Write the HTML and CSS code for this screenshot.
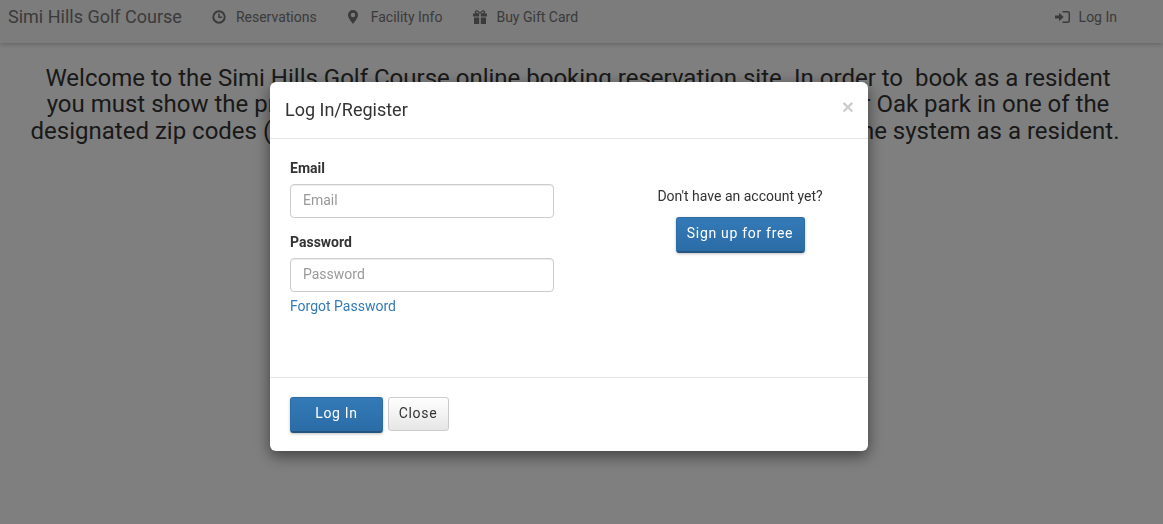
FILE: index.html
```html
<!DOCTYPE html>
<html lang="en">

<head>
    <meta charset="UTF-8">
    <title>Simi Hills Golf Course</title>
    <link rel="stylesheet" href="styles.css">
</head>

<body>

    <nav class="navbar">
        <a class="brand" href="#">Simi Hills Golf Course</a>
        <a class="nav-link" href="#">
            <svg class="icon" viewBox="0 0 14 14"><circle cx="7" cy="7" r="5.7" fill="none" stroke="currentColor" stroke-width="2"/><path d="M6.2 3.4h1.500v3.100h2.400V8H6.200z" fill="currentColor"/></svg>
            <span>Reservations</span>
        </a>
        <a class="nav-link nav-info" href="#">
            <svg class="icon icon-pin" viewBox="0 0 10 14"><path fill-rule="evenodd" d="M5 0a5 5 0 0 1 5 5c0 2.800-3.300 6.700-5 9C3.300 11.700 0 7.800 0 5a5 5 0 0 1 5-5zm0 2.800a2.200 2.200 0 1 0 0 4.400 2.200 2.200 0 0 0 0-4.400z" fill="currentColor"/></svg>
            <span>Facility Info</span>
        </a>
        <a class="nav-link nav-gift" href="#">
            <svg class="icon" viewBox="0 0 14 14"><path fill-rule="evenodd" d="M3.800 0.300c1.300 0 2.500 1 3.200 2.300C7.700 1.300 8.900 0.300 10.200 0.300c1.200 0 2 .7 2 1.700 0 .6-.3 1.100-.7 1.500H14v3H7.800v-3h-1.600v3H0v-3h2.500C2.100 3.100 1.800 2.600 1.800 2c0-1 .8-1.700 2-1.700zm.1 1.300c-.5 0-.8.200-.8.500 0 .6 1.200 1.300 2.900 1.400C5.500 2.400 4.700 1.600 3.900 1.600zm6.200 0c-.8 0-1.600.8-2.100 1.900 1.700-.1 2.900-.8 2.900-1.400 0-.3-.3-.5-.8-.5zM1 7.500h5.200V14H1zm6.800 0H13V14H7.800z" fill="currentColor"/></svg>
            <span>Buy Gift Card</span>
        </a>
        <a class="nav-link nav-right" href="#">
            <svg class="icon icon-login" viewBox="0 0 16 14"><path d="M0 5.500h4V2.800L8.700 7 4 11.200V8.500H0z" fill="currentColor"/><path d="M7.500 1h5.300A2.200 2.200 0 0 1 15 3.200v7.600a2.200 2.200 0 0 1-2.200 2.200H7.500v-1.600h5a1 1 0 0 0 1-1V3.600a1 1 0 0 0-1-1h-5z" fill="currentColor"/></svg>
            <span>Log In</span>
        </a>
    </nav>

    <p class="welcome">Welcome to the Simi Hills Golf Course online booking reservation site. In order to&nbsp; book as a resident<br>
        you must show the proof of residency at check in&nbsp; and to live in&nbsp; Simi Valley or Oak park in one of the<br>
        designated zip codes (93063, 93065, 91377 and 91301)&nbsp; to be registered into the system as a resident.&nbsp;</p>

    <div class="backdrop"></div>

    <div class="modal">
        <header class="modal-header">
            <h4>Log In/Register</h4>
            <span class="close-x">&times;</span>
        </header>
        <div class="modal-body">
            <form class="login-form">
                <label for="email">Email</label>
                <input id="email" type="text" placeholder="Email">
                <label for="password">Password</label>
                <input id="password" type="password" placeholder="Password">
                <a class="forgot" href="#">Forgot Password</a>
            </form>
            <div class="signup">
                <p>Don't have an account yet?</p>
                <button class="btn btn-primary btn-signup">Sign up for free</button>
            </div>
        </div>
        <footer class="modal-footer">
            <button class="btn btn-primary btn-login">Log In</button>
            <button class="btn btn-default">Close</button>
        </footer>
    </div>

</body>

</html>
```

FILE: styles.css
```css
* {
    box-sizing: border-box;
}

html,
body {
    height: 100%;
}

body {
    margin: 0;
    background: #fff;
    color: #333;
    font-family: Roboto, "Liberation Sans", sans-serif;
    font-size: 14px;
    line-height: 20px;
    overflow: hidden;
}

a {
    text-decoration: none;
}

/* Navbar */
.navbar {
    display: flex;
    align-items: center;
    height: 43px;
    padding: 0 31px 10px 8px;
    background: #f8f8f8;
    box-shadow: 0 1px 5px rgba(0, 0, 0, .25);
}

.brand {
    margin-right: 15px;
    color: #777;
    font-size: 18px;
}

.nav-link {
    display: flex;
    align-items: center;
    gap: 10px;
    padding: 0 15px;
    color: #777;
}

.nav-info {
    margin-left: 1px;
}

.nav-gift {
    gap: 9px;
    margin-left: 1px;
}

.nav-right {
    margin-left: auto;
}

.icon {
    width: 14px;
    height: 14px;
    flex: none;
}

.icon-pin {
    width: 10px;
    margin-right: 3px;
}

.icon-login {
    width: 16px;
    margin-right: -2px;
}

.welcome {
    margin: 22px 0 0;
    padding-right: 7px;
    font-size: 24px;
    line-height: 26.4px;
    text-align: center;
    white-space: nowrap;
}

/* Modal */
.backdrop {
    position: fixed;
    inset: 0;
    background: rgba(0, 0, 0, .5);
}

.modal {
    position: fixed;
    top: 82px;
    left: 270px;
    width: 598px;
    background: #fff;
    border-radius: 6px;
    box-shadow: 0 5px 15px rgba(0, 0, 0, .5);
}

.modal-header {
    display: flex;
    justify-content: space-between;
    height: 57px;
    padding: 15px 14px 15px 15px;
    border-bottom: 1px solid #e5e5e5;
}

.modal-header h4 {
    margin: 0;
    font-size: 18px;
    font-weight: 400;
    line-height: 26px;
}

.close-x {
    color: #000;
    opacity: .2;
    font-size: 21px;
    font-weight: 700;
    line-height: 20px;
    font-family: "Liberation Sans", sans-serif;
}

.modal-body {
    display: grid;
    grid-template-columns: 264px 1fr;
    column-gap: 78px;
    height: 239px;
    padding: 19px 20px 20px;
    border-bottom: 1px solid #e5e5e5;
}

.login-form {
    display: flex;
    flex-direction: column;
}

.login-form label {
    margin-bottom: 6px;
    font-weight: 700;
    line-height: 20px;
}

.login-form input {
    height: 34px;
    margin-bottom: 14px;
    padding: 5px 12px 7px;
    border: 1px solid #ccc;
    border-radius: 4px;
    color: #555;
    font: inherit;
    box-shadow: inset 0 1px 1px rgba(0, 0, 0, .075);
}

.login-form input::placeholder {
    color: #999;
}

.login-form input:last-of-type {
    margin-bottom: 4px;
}

.forgot {
    color: #337ab7;
}

.signup {
    padding-top: 28px;
    text-align: center;
}

.signup p {
    margin: 0 0 11px;
}

/* Buttons */
.btn {
    padding: 5px 0 7px;
    border: 1px solid transparent;
    border-radius: 3px;
    font: inherit;
    letter-spacing: .7px;
    vertical-align: top;
    white-space: nowrap;
}

.btn-primary {
    height: 36px;
    padding: 4px 0 8px;
    border-color: #2e6da4;
    border-bottom: 2px solid #245580;
    background: linear-gradient(#337ab7, #2b6ca6);
    color: #fff;
    box-shadow: 0 1px 3px rgba(0, 0, 0, .25);
}

.btn-signup {
    width: 129px;
}

.btn-login {
    width: 93px;
}

.btn-default {
    width: 61px;
    height: 34px;
    margin-left: 2px;
    padding-right: 2px;
    border-color: #ccc;
    background: linear-gradient(#fff, #e6e6e6);
    color: #333;
}

.modal-footer {
    padding: 19px 20px 18px;
}
```
